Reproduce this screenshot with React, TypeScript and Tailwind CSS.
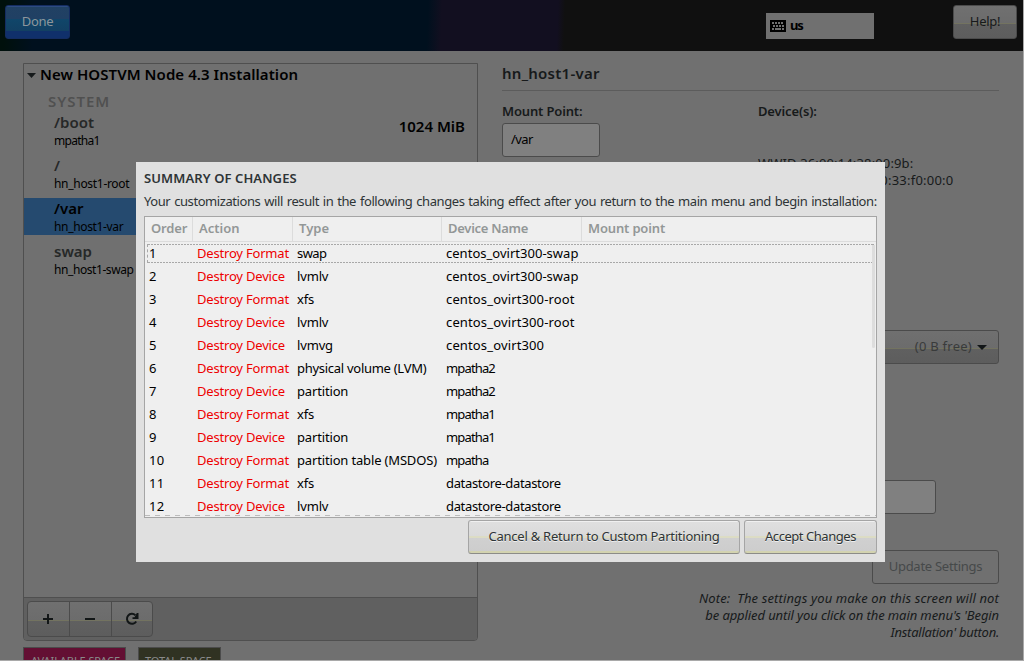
import React from "react";

type Mount = { name: string; device: string; size?: string; selected?: boolean; fit: string };

const mounts: Mount[] = [
  { name: "/boot", device: "mpatha1", size: "1024 MiB", fit: "tracking-[-0.7px]" },
  { name: "/", device: "hn_host1-root", fit: "tracking-[-0.3px]" },
  { name: "/var", device: "hn_host1-var", selected: true, fit: "tracking-[-0.34px]" },
  { name: "swap", device: "hn_host1-swap", fit: "tracking-[-0.42px]" },
];

const changes: [string, string, string][] = [
  ["Destroy Format", "swap", "centos_ovirt300-swap"],
  ["Destroy Device", "lvmlv", "centos_ovirt300-swap"],
  ["Destroy Format", "xfs", "centos_ovirt300-root"],
  ["Destroy Device", "lvmlv", "centos_ovirt300-root"],
  ["Destroy Device", "lvmvg", "centos_ovirt300"],
  ["Destroy Format", "physical volume (LVM)", "mpatha2"],
  ["Destroy Device", "partition", "mpatha2"],
  ["Destroy Format", "xfs", "mpatha1"],
  ["Destroy Device", "partition", "mpatha1"],
  ["Destroy Format", "partition table (MSDOS)", "mpatha"],
  ["Destroy Format", "xfs", "datastore-datastore"],
  ["Destroy Device", "lvmlv", "datastore-datastore"],
];

function deviceFit(device: string) {
  if (device.startsWith("datastore")) return "tracking-[-0.34px]";
  if (device.startsWith("mpatha")) return "tracking-[-0.85px]";
  return device.endsWith("swap") ? "tracking-[0.02px]" : "tracking-[0.14px]";
}

function typeFit(type: string) {
  if (type.startsWith("physical")) return "tracking-[-0.28px]";
  if (type === "swap") return "tracking-[-0.6px]";
  return "tracking-[-0.16px]";
}

const dimButton =
  "border border-[#4b4b4b] bg-[linear-gradient(#707070_0,#6c6c6c_52%,#737360_52%,#737360_57%,#606060_57%,#5d5d5d_100%)]";
const litButton =
  "h-[34px] rounded-[3px] border border-[#a5a5a5] border-b-[#8c8c88] bg-[linear-gradient(#f0f0f0_0,#f0f0f0_4%,#dfdfdf_4%,#dadada_47%,#dcdcc4_47%,#dcdcc4_53%,#d0d0d0_53%,#cdcdcd_95%,#d3d3b0_95%)] pb-[2px] text-center text-[13px] leading-[29px] text-[#2e3436] [text-shadow:0_1px_#eeeeee]";

function Header() {
  return (
    <header className="flex h-[51px] shrink-0 items-start bg-[linear-gradient(92deg,#00100c_0,#00100c_5px,#00101e_34px,#00101e_428px,#120f20_442px,#120f20_558px,#101010_565px)] pl-[5px] pr-[6px] pt-[5px]">
      <button className="h-[34px] w-[65px] rounded-[3px] border border-[#142c61] bg-[linear-gradient(#2d4b80_0,#2d4b80_3%,#214163_3%,#204064_40%,#10466a_40%,#124063_77%,#10306b_77%,#10306b_100%)] pb-[2px] text-[13px] leading-[29px] tracking-[-0.3px] text-[#8d969c]">
        Done
      </button>
      <div className="ml-[696px] mt-2 flex h-[26px] w-[108px] items-center bg-[#707070] pl-1">
        <svg width="16" height="12" viewBox="0 0 16 12" shapeRendering="crispEdges">
          <rect width="16" height="12" fill="#000" />
          <path
            d="M2 2h2v2h-2zM5 2h2v2h-2zM8 2h2v2h-2zM11 2h2v2h-2zM3 5h2v2h-2zM6 5h2v2h-2zM9 5h2v2h-2zM12 5h2v2h-2zM2 8h2v2h-2zM5 8h6v2h-6zM12 8h2v2h-2z"
            fill="#707070"
          />
        </svg>
        <span className="ml-1 text-[13px] font-bold tracking-[-1.2px]">us</span>
      </div>
      <button className={`${dimButton} ml-auto h-[34px] w-[64px] rounded-[3px] pb-[2px] text-[13px] leading-[29px] tracking-[-0.3px] text-[#171a1b]`}>
        Help!
      </button>
    </header>
  );
}

function MountList() {
  return (
    <section className="flex h-[578px] w-[455px] flex-col rounded-b-[4px] border border-[#4f4f4f]">
      <div className="flex h-[22px] items-center text-[15px] font-semibold">
        <svg className="ml-[3px] mr-1 w-[9px] shrink-0" width="9" height="5" viewBox="0 0 9 5">
          <path d="M0 0h9L4.5 5z" fill="#161a1b" />
        </svg>
        <span className="pb-[2px] tracking-[0.06px]">New HOSTVM Node 4.3 Installation</span>
      </div>
      <div className="mt-[6px] h-[20px] pl-6 text-[15px] font-semibold leading-[19px] tracking-[0.95px] text-[#505050]">SYSTEM</div>
      {mounts.map((m) => (
        <div
          key={m.name}
          className={`mb-[6px] flex h-[37px] items-start pl-[30px] pr-3 ${m.selected ? "bg-[#254a6f] text-black" : "text-[#262828]"}`}
        >
          <div className="flex-1">
            <div className="h-[20px] text-[15px] font-semibold leading-[20px]">{m.name}</div>
            <div className={`h-[17px] text-[12px] leading-[17px] text-black ${m.fit}`}>{m.device}</div>
          </div>
          <span className="text-[15px] font-semibold leading-[28px] text-black">{m.size}</span>
        </div>
      ))}
      <div className="mt-auto flex h-[43px] items-start rounded-b-[3px] border-t border-[#4f4f4f] bg-[#606060] pl-[3px] pt-[3px]">
        <button className={`${dimButton} flex h-9 w-[43px] items-center justify-center rounded-l-[4px] pr-px`}>
          <svg width="12" height="12" viewBox="0 0 12 12">
            <path d="M1 6h10M6 1v10" stroke="#121617" strokeWidth="2" />
          </svg>
        </button>
        <button className={`${dimButton} -ml-px flex h-9 w-[43px] items-center justify-center pr-px`}>
          <svg width="12" height="12" viewBox="0 0 12 12">
            <path d="M1 6h10" stroke="#121617" strokeWidth="2" />
          </svg>
        </button>
        <button className={`${dimButton} -ml-px flex h-9 w-[42px] items-center justify-center rounded-r-[4px]`}>
          <svg width="14" height="14" viewBox="0 0 14 14">
            <path d="M11.2 9.5A5 5 0 1 1 10.4 3.2" fill="none" stroke="#121617" strokeWidth="2" />
            <path d="M13.5 1v6H7.5V5.2h2L11.8 1z" fill="#121617" />
          </svg>
        </button>
      </div>
    </section>
  );
}

function Details() {
  return (
    <section className="flex h-[578px] w-[497px] flex-col text-[13px] text-[#171a1b]">
      <h1 className="h-[28px] border-b border-[#5c5c5c] text-[15px] font-semibold leading-[20px] tracking-[0.25px]">hn_host1-var</h1>
      <div className="flex h-[239px] pt-[10px]">
        <div className="w-[256px]">
          <div className="h-[22px] font-semibold leading-[21px] tracking-[-0.15px]">Mount Point:</div>
          <div className="h-[34px] w-[98px] rounded-[3px] border border-[#4b4b4b] bg-[#808080] pl-2 leading-[31px] tracking-[-0.6px] text-black">
            /var
          </div>
        </div>
        <div>
          <div className="h-[22px] font-semibold leading-[21px] tracking-[-0.15px]">Device(s):</div>
          <div className="mt-[32px] leading-[17px]">
            <span className="tracking-[0.14px]">WWID 36:00:14:38:00:9b:</span>
            <br />
            <span className="tracking-[0.22px]">56:d0:00:00:60:00:00:33:f0:00:0</span>
          </div>
        </div>
      </div>
      <div className={`${dimButton} ml-auto flex h-[34px] w-[241px] items-center justify-end rounded-[3px] pr-[11px] text-[#393b3b]`}>
        <span className="pb-[1px] tracking-[0.25px]">(0 B free)</span>
        <svg className="ml-[5px] mt-px" width="10" height="5" viewBox="0 0 10 5">
          <path d="M0 0h10L5 5z" fill="#121617" />
        </svg>
      </div>
      <div className="ml-[256px] mt-[116px] h-[34px] w-[178px] rounded-[3px] border border-[#4b4b4b] bg-[#808080]" />
      <button className="ml-auto mt-9 h-[34px] w-[127px] rounded-[3px] border border-[#4b4b4b] pb-[2px] text-[13px] leading-[29px] tracking-[-0.27px] text-[#46494a]">
        Update Settings
      </button>
      <div className="mt-[6px] whitespace-pre text-right italic leading-[17px]">
        <p className="tracking-[0.13px]">{"Note:  The settings you make on this screen will not"}</p>
        <p className="tracking-[-0.1px]">be applied until you click on the main menu's 'Begin</p>
        <p className="tracking-[-0.25px]">Installation' button.</p>
      </div>
    </section>
  );
}

function SummaryDialog() {
  return (
    <div className="absolute left-[136px] top-[162px] flex h-[400px] w-[749px] flex-col bg-[#e0e0e0] px-2 text-[13px] text-[#2e3436]">
      <h2 className="mt-[5px] h-[23px] font-semibold leading-[22px] tracking-[0.1px]">SUMMARY OF CHANGES</h2>
      <p className="h-[26px] whitespace-nowrap leading-[22px] tracking-[-0.42px] [word-spacing:0.9px]">
        Your customizations will result in the following changes taking effect after you return to the main menu and begin installation:
      </p>
      <div className="relative h-[302px] border border-[#a5a5a5] bg-[#efefef]">
        <div className="flex h-[25px] border-b border-[#dcdcdc] font-semibold leading-[23px] tracking-[-0.16px] text-[#939797]">
          <span className="w-[48px] border-r border-[#dcdcdc] pl-[6px]">Order</span>
          <span className="w-[100px] border-r border-[#dcdcdc] pl-[6px] tracking-normal">Action</span>
          <span className="w-[149px] border-r border-[#dcdcdc] pl-[6px] tracking-normal">Type</span>
          <span className="w-[140px] border-r border-[#dcdcdc] pl-[6px] tracking-[-0.28px]">Device Name</span>
          <span className="pl-[6px]">Mount point</span>
        </div>
        {changes.map(([action, type, device], i) => (
          <div key={i} className="flex h-[23px] whitespace-nowrap pl-1 leading-[22px] text-black">
            <span className="w-[48px] tracking-[0.3px]">{i + 1}</span>
            <span className="w-[100px] tracking-[-0.19px] text-[#ee0000]">{action}</span>
            <span className={`w-[149px] ${typeFit(type)}`}>{type}</span>
            <span className={deviceFit(device)}>{device}</span>
          </div>
        ))}
        <div className="absolute left-[2px] top-[27px] flex h-[19px] w-[727px] flex-col justify-between border-x border-dashed border-[#a8a8a8]">
          <div className="h-px bg-[repeating-linear-gradient(90deg,#a8a8a8_0,#a8a8a8_2px,transparent_2px,transparent_3px)]" />
          <div className="h-px bg-[repeating-linear-gradient(90deg,#a8a8a8_0,#a8a8a8_2px,transparent_2px,transparent_3px)]" />
        </div>
        <div className="absolute right-[1px] top-[28px] h-[103px] w-[3px] rounded-b bg-[#dddddd]" />
        <div className="absolute bottom-px left-0 h-px w-full bg-[repeating-linear-gradient(90deg,#bcbcbc_0,#bcbcbc_5px,transparent_5px,transparent_10px)]" />
      </div>
      <div className="mt-[2px] flex justify-end gap-1">
        <button className={`${litButton} w-[272px] tracking-[-0.24px]`}>Cancel &amp; Return to Custom Partitioning</button>
        <button className={`${litButton} w-[133px] tracking-[-0.45px]`}>Accept Changes</button>
      </div>
    </div>
  );
}

export default function App() {
  return (
    <div className="relative flex h-[661px] w-[1024px] flex-col overflow-hidden border-b border-r border-[#a9a9a9] bg-[#707070] font-['Noto_Sans',sans-serif] text-black">
      <Header />
      <main className="flex shrink-0 gap-6 pl-[23px] pt-3">
        <MountList />
        <Details />
      </main>
      <footer className="mt-[6px] flex shrink-0 gap-3 pl-[23px] text-[11px] leading-[26px] text-[#8a8a8a]">
        <div className="h-[40px] w-[103px] border border-[#4b4b4b] bg-[#630f33] pl-[7px] tracking-[-0.08px]">AVAILABLE SPACE</div>
        <div className="h-[40px] w-[83px] border border-[#4b4b4b] bg-[#303222] pl-[6px] tracking-[-0.05px]">TOTAL SPACE</div>
      </footer>
      <SummaryDialog />
    </div>
  );
}
